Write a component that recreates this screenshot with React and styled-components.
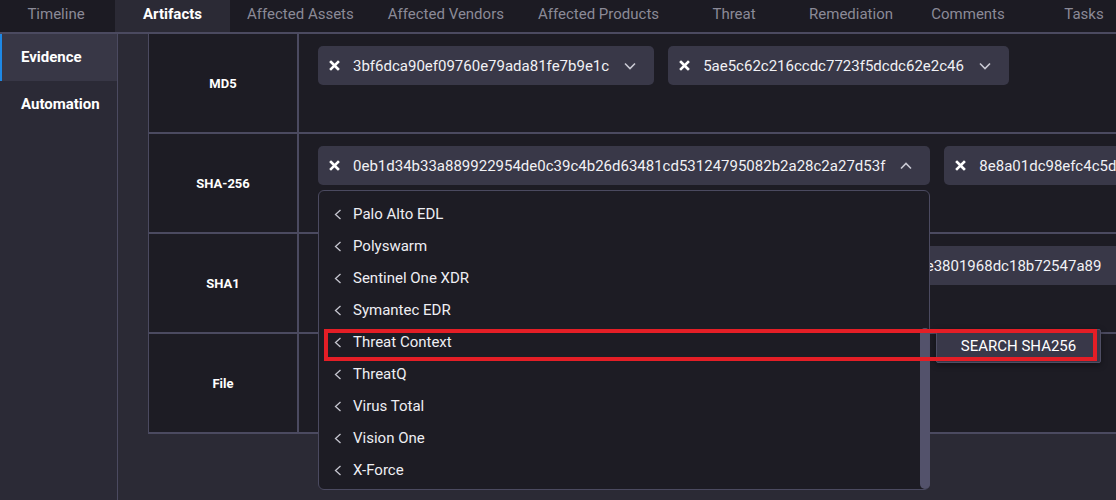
import React, { useLayoutEffect, useRef } from "react";
import styled, { createGlobalStyle } from "styled-components";

const GlobalStyle = createGlobalStyle`
  html, body {
    margin: 0;
    padding: 0;
    height: 500px;
    overflow: hidden;
    background: #2b2a35;
    font-family: Roboto, "Liberation Sans", sans-serif;
  }
`;

const tabs = [
  "Timeline",
  "Artifacts",
  "Affected Assets",
  "Affected Vendors",
  "Affected Products",
  "Threat",
  "Remediation",
  "Comments",
  "Tasks",
];

const integrations = [
  "Anomali ThreatStream",
  "Carbon Black",
  "Cortex XDR",
  "CrowdStrike Falcon",
  "Defender ATP",
  "FortiSandbox",
  "Hybrid Analysis",
  "MISP",
  "Palo Alto EDL",
  "Polyswarm",
  "Sentinel One XDR",
  "Symantec EDR",
  "Threat Context",
  "ThreatQ",
  "Virus Total",
  "Vision One",
  "X-Force",
];

const Page = styled.div`
  display: flex;
  flex-direction: column;
  height: 500px;
  overflow: hidden;
`;

const TabBar = styled.div`
  display: flex;
  height: 32px;
  flex-shrink: 0;
  background: #1c1b23;
  border-bottom: 2px solid #4b4a60;
  overflow: hidden;
`;

const Tab = styled.div`
  flex-shrink: 0;
  min-width: 116px;
  box-sizing: border-box;
  padding: 0 17px 4px;
  display: flex;
  align-items: center;
  justify-content: center;
  white-space: nowrap;
  font-size: 15px;
  color: ${(p) => (p.$active ? "#ffffff" : "#8b8a97")};
  font-weight: ${(p) => (p.$active ? 700 : 400)};
  background: ${(p) => (p.$active ? "#2b2a35" : "transparent")};

  &:first-child {
    min-width: 115px;
    padding-right: 20px;
  }
  &:nth-child(2) {
    min-width: 115px;
  }
`;

const Body = styled.div`
  display: flex;
  flex: 1;
  min-height: 0;
`;

const Sidebar = styled.div`
  width: 117px;
  flex-shrink: 0;
  background: #2b2a36;
  border-right: 1px solid #4b4a60;
`;

const SideItem = styled.div`
  height: 47px;
  display: flex;
  align-items: center;
  padding-left: ${(p) => (p.$active ? "19px" : "21px")};
  padding-bottom: 2px;
  box-sizing: border-box;
  border-left: ${(p) => (p.$active ? "2px solid #1e88e5" : "none")};
  background: ${(p) => (p.$active ? "#383746" : "transparent")};
  color: #ffffff;
  font-weight: 700;
  font-size: 15px;
`;

const Main = styled.div`
  position: relative;
  flex: 1;
  min-width: 0;
  padding-left: 30px;
  background: #2b2a35;
  overflow: hidden;
`;

const Table = styled.div`
  width: max-content;
  min-width: 100%;
  background: #1d1c24;
  border-left: 1px solid #4b4a60;
`;

const Row = styled.div`
  display: grid;
  grid-template-columns: 150px auto;
  height: 100px;
  box-sizing: border-box;
  border-bottom: 2px solid #4b4a60;
`;

const Label = styled.div`
  display: flex;
  align-items: center;
  justify-content: center;
  border-right: 2px solid #4b4a60;
  color: #ffffff;
  font-weight: 700;
  font-size: 13px;
`;

const Values = styled.div`
  display: flex;
  align-items: flex-start;
  gap: 14px;
  padding: 12px 19px;
`;

const ChipWrap = styled.div`
  position: relative;
  flex-shrink: 0;
`;

const Chip = styled.div`
  display: flex;
  align-items: center;
  height: 39px;
  box-sizing: border-box;
  padding: 0 18px 0 11px;
  background: #393848;
  border-radius: 5px;
  color: #f1f1f5;
  font-size: 15px;
  white-space: nowrap;
`;

const Hash = styled.span`
  margin: 0 15px 0 13px;
`;

const Menu = styled.div`
  position: absolute;
  z-index: 10;
  top: calc(100% + 5px);
  left: 0;
  right: 0;
  height: 300px;
  box-sizing: border-box;
  background: #1d1c24;
  border: 1px solid #4b4a60;
  border-radius: 6px;
`;

const MenuList = styled.div`
  height: 100%;
  overflow: hidden;
  box-sizing: border-box;
  padding: 8px 0 3px;
  border-radius: 6px;
`;

const ScrollThumb = styled.div`
  position: absolute;
  right: -1px;
  bottom: 0;
  width: 10px;
  height: 161px;
  border-radius: 5px;
  background: #53526b;
`;

const MenuItem = styled.div`
  display: flex;
  align-items: center;
  gap: 11px;
  height: 32px;
  padding-left: 15px;
  color: #eeeef3;
  font-size: 15px;
  white-space: nowrap;
`;

const SubMenu = styled.div`
  position: absolute;
  z-index: 20;
  left: 818px;
  top: 295px;
  width: 165px;
  height: 34px;
  box-sizing: border-box;
  display: flex;
  align-items: center;
  justify-content: center;
  background: #393849;
  border: 1px solid #4f4e64;
  border-radius: 2px;
  box-shadow: 0 2px 6px rgba(0, 0, 0, 0.4);
  color: #ffffff;
  font-size: 15px;
  text-transform: uppercase;
`;

const Highlight = styled.div`
  position: absolute;
  z-index: 30;
  left: 206px;
  top: 295px;
  width: 773px;
  height: 32px;
  box-sizing: border-box;
  border: 4px solid #e41e26;
  pointer-events: none;
`;

const XIcon = () => (
  <svg width="11" height="11" viewBox="0 0 11 11">
    <path d="M2 2L9 9M9 2L2 9" stroke="#ffffff" strokeWidth="2.6" strokeLinecap="square" />
  </svg>
);

const Chevron = ({ up }) => (
  <svg width="12" height="8" viewBox="0 0 12 8">
    <path
      d={up ? "M1 6.5L6 1.5L11 6.5" : "M1 1.5L6 6.5L11 1.5"}
      fill="none"
      stroke="#c9c9d3"
      strokeWidth="1.6"
    />
  </svg>
);

const LeftChevron = () => (
  <svg width="8" height="11" viewBox="0 0 8 11">
    <path d="M6.5 1L1.5 5.5L6.5 10" fill="none" stroke="#c4c4ce" strokeWidth="1.3" />
  </svg>
);

function HashChip({ value, open, children }) {
  return (
    <ChipWrap>
      <Chip>
        <XIcon />
        <Hash>{value}</Hash>
        <Chevron up={open} />
      </Chip>
      {children}
    </ChipWrap>
  );
}

function IntegrationMenu() {
  const listRef = useRef(null);
  useLayoutEffect(() => {
    // the menu is shown scrolled to its last entries
    if (listRef.current) listRef.current.scrollTop = listRef.current.scrollHeight;
  }, []);
  return (
    <Menu>
      <MenuList ref={listRef}>
        {integrations.map((name) => (
          <MenuItem key={name}>
            <LeftChevron />
            {name}
          </MenuItem>
        ))}
      </MenuList>
      <ScrollThumb />
    </Menu>
  );
}

export default function App() {
  return (
    <Page>
      <GlobalStyle />
      <TabBar>
        {tabs.map((t) => (
          <Tab key={t} $active={t === "Artifacts"}>
            {t}
          </Tab>
        ))}
      </TabBar>
      <Body>
        <Sidebar>
          <SideItem $active>Evidence</SideItem>
          <SideItem>Automation</SideItem>
        </Sidebar>
        <Main>
          <Table>
            <Row>
              <Label>MD5</Label>
              <Values>
                <HashChip value="3bf6dca90ef09760e79ada81fe7b9e1c" />
                <HashChip value="5ae5c62c216ccdc7723f5dcdc62e2c46" />
              </Values>
            </Row>
            <Row>
              <Label>SHA-256</Label>
              <Values>
                <HashChip value="0eb1d34b33a889922954de0c39c4b26d63481cd53124795082b2a28c2a27d53f" open>
                  <IntegrationMenu />
                </HashChip>
                <HashChip value="8e8a01dc98efc4c5d9f2a7b31c06e4d85a9f17c3b2e6d04a81f5c9e27b3d6a10" />
              </Values>
            </Row>
            <Row>
              <Label>SHA1</Label>
              <Values>
                <HashChip value="7c4efa2b8d05f13e6afc0b47d2e85a1cf3b6d0e4" />
                <HashChip value="2b9d41c07e5a8d36b10e3801968dc18b72547a89" />
              </Values>
            </Row>
            <Row>
              <Label>File</Label>
              <Values />
            </Row>
          </Table>
          <SubMenu>Search SHA256</SubMenu>
          <Highlight />
        </Main>
      </Body>
    </Page>
  );
}
